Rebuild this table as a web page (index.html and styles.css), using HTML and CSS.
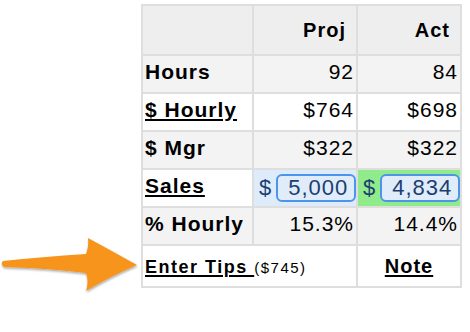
FILE: index.html
```html
<!DOCTYPE html>
<html lang="en">
<head>
    <meta charset="UTF-8">
    <meta name="viewport" content="width=device-width, initial-scale=1.0">
    <title>Labor Summary</title>
    <link rel="stylesheet" href="styles.css">
</head>
<body>
    <div class="page">
        <!-- pointer that calls out the tips link -->
        <svg class="pointer" width="141" height="290" viewBox="0 0 141 290">
            <defs>
                <filter id="soft" x="-10%" y="-20%" width="130%" height="150%">
                    <feDropShadow dx="0.5" dy="1.5" stdDeviation="1.2" flood-color="#000" flood-opacity="0.35"/>
                </filter>
            </defs>
            <path filter="url(#soft)" fill="#f7941d"
                  d="M3,257 Q42,253 86,250 Q89,242 88,234 Q112,247 137,261 Q111,272 86,287 Q89,278 86,269 Q45,264 4,263 Q0,260 3,257 Z"/>
        </svg>

        <table class="labor">
            <colgroup>
                <col class="col-label">
                <col class="col-num">
                <col class="col-num">
            </colgroup>
            <thead>
                <tr>
                    <th></th>
                    <th>Proj</th>
                    <th>Act</th>
                </tr>
            </thead>
            <tbody>
                <tr class="shade">
                    <td class="label">Hours</td>
                    <td>92</td>
                    <td>84</td>
                </tr>
                <tr>
                    <td class="label"><a href="#">$ Hourly</a></td>
                    <td>$764</td>
                    <td>$698</td>
                </tr>
                <tr class="shade">
                    <td class="label">$ Mgr</td>
                    <td>$322</td>
                    <td>$322</td>
                </tr>
                <tr>
                    <td class="label"><a href="#">Sales</a></td>
                    <td class="entry proj">
                        <div class="entry-wrap"><span class="cur">$</span><input class="field" type="text" value="5,000"></div>
                    </td>
                    <td class="entry act">
                        <div class="entry-wrap"><span class="cur">$</span><input class="field" type="text" value="4,834"></div>
                    </td>
                </tr>
                <tr class="shade">
                    <td class="label">% Hourly</td>
                    <td>15.3%</td>
                    <td>14.4%</td>
                </tr>
                <tr class="last">
                    <td class="tips" colspan="2"><a href="#">Enter Tips </a><small>($745)</small></td>
                    <td class="note"><a href="#">Note</a></td>
                </tr>
            </tbody>
        </table>
    </div>
</body>
</html>
```

FILE: styles.css
```css
/* page: white, pointer on the left, table beside it */
body, html {
    margin: 0;
    padding: 0;
    background: #fff;
    font-family: "Liberation Sans", Arial, sans-serif;
    color: #000;
}

.page {
    display: flex;
    align-items: flex-start;
    padding-top: 4px;
}

.pointer {
    flex: none;
    display: block;
}

/* grid lines come from the table colour showing through the spacing */
.labor {
    table-layout: fixed;
    width: 321px;
    border-collapse: separate;
    border-spacing: 2px;
    background-color: #dedede;
    font-size: 21px;
    letter-spacing: 1px;
}

.col-label {
    width: 109px;
}

.col-num {
    width: 102px;
}

.labor th,
.labor td {
    padding: 0 2px 4px 2px;
    height: 32px;
    text-align: right;
    vertical-align: middle;
    background-color: #fff;
    white-space: nowrap;
    overflow: hidden;
}

.labor th {
    height: 48px;
    padding: 0 10px 0 2px;
    background-color: #eeeeee;
    font-weight: bold;
    font-size: 20px;
}

.labor tr.shade td {
    background-color: #f3f3f3;
}

.labor td.label {
    text-align: left;
    font-weight: bold;
}

.labor a {
    color: #000;
    text-decoration: underline;
    text-decoration-thickness: 2px;
    text-underline-offset: 2px;
}

/* sales entry boxes */
.labor td.entry {
    padding: 0 0 0 5px;
    height: 36px;
}

.labor td.proj {
    background-color: #ddebfb;
}

.labor td.act {
    background-color: #90ec8a;
}

.entry-wrap {
    display: flex;
    align-items: center;
    gap: 4px;
}

.cur {
    color: #1b3f70;
    font-size: 22px;
}

.field {
    flex: 1;
    min-width: 0;
    height: 28px;
    box-sizing: border-box;
    margin: 0;
    padding: 0 6px 0 10px;
    border: 2px solid #4d94eb;
    border-radius: 6px;
    background-color: #e1ecfa;
    color: #1b3f70;
    font-family: "Liberation Sans", Arial, sans-serif;
    font-size: 22px;
    letter-spacing: 1px;
    outline: 0;
}

/* bottom row */
.labor tr.last td {
    height: 37px;
    padding-bottom: 0;
}

.labor td.tips {
    text-align: left;
    font-weight: bold;
    font-size: 18px;
    letter-spacing: 1.5px;
    padding-top: 3px;
}

.labor td.tips small {
    font-weight: normal;
    font-size: 15px;
    letter-spacing: 1.5px;
}

.labor td.note {
    text-align: center;
    font-weight: bold;
    font-size: 20px;
    padding-bottom: 2px;
}
```
